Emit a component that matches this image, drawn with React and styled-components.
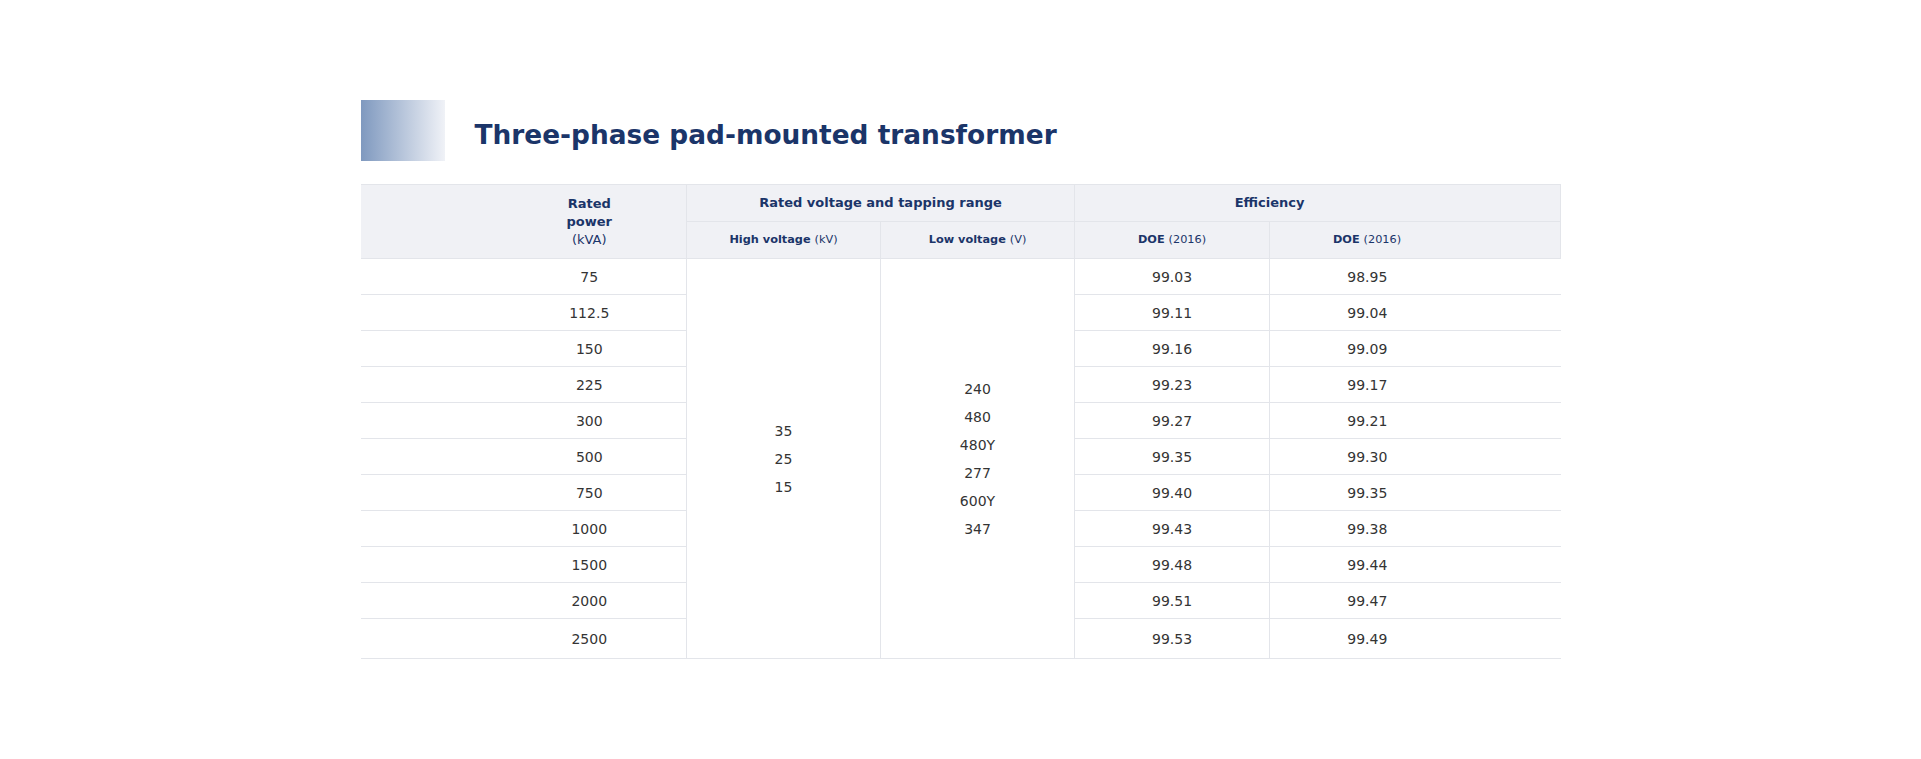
import React from 'react';
import styled, { createGlobalStyle } from 'styled-components';

const navy = '#1b3569';
const line = '#e3e5ea';

const ratings = [
  ['75', '99.03', '98.95'],
  ['112.5', '99.11', '99.04'],
  ['150', '99.16', '99.09'],
  ['225', '99.23', '99.17'],
  ['300', '99.27', '99.21'],
  ['500', '99.35', '99.30'],
  ['750', '99.40', '99.35'],
  ['1000', '99.43', '99.38'],
  ['1500', '99.48', '99.44'],
  ['2000', '99.51', '99.47'],
  ['2500', '99.53', '99.49'],
];

const highVoltages = ['35', '25', '15'];
const lowVoltages = ['240', '480', '480Y', '277', '600Y', '347'];

const GlobalStyle = createGlobalStyle`
  body {
    margin: 0;
    background: #fff;
    font-family: "DejaVu Sans", "Noto Sans", sans-serif;
  }
`;

const Page = styled.div`
  padding-top: 100px;
  padding-bottom: 100px;
`;

const Wrapper = styled.section`
  width: 1200px;
  margin: 0 auto;
`;

const TitleRow = styled.div`
  display: flex;
  align-items: center;
  gap: 30px;
  height: 61px;
`;

const Swatch = styled.div`
  width: 84px;
  height: 61px;
  background: linear-gradient(90deg, #7f99bf 0%, #f0f2f7 100%);
`;

const Title = styled.h2`
  margin: 0;
  padding-top: 7px;
  font-size: 26.4px;
  font-weight: 700;
  color: ${navy};
`;

const Table = styled.table`
  width: 1200px;
  margin-top: 23px;
  table-layout: fixed;
  border-collapse: collapse;
`;

const HeadRow = styled.tr`
  height: ${(p) => p.$h}px;
`;

const Th = styled.th`
  background: #f0f1f5;
  border: 1px solid ${line};
  border-left: ${(p) => (p.$first ? 'none' : `1px solid ${line}`)};
  color: ${navy};
  font-size: ${(p) => (p.$small ? 11.3 : 13)}px;
  font-weight: 700;
  line-height: 18px;
  text-align: center;
  vertical-align: middle;
  padding: 0 ${(p) => (p.$last ? 96 : 0)}px 0 ${(p) => (p.$first ? 132 : 0)}px;
`;

const Unit = styled.span`
  font-weight: 400;
`;

const Row = styled.tr`
  height: ${(p) => (p.$tall ? 40 : 36)}px;
`;

const Td = styled.td`
  border-top: 1px solid ${line};
  border-bottom: 1px solid ${line};
  border-left: ${(p) => (p.$first ? 'none' : `1px solid ${line}`)};
  color: #343434;
  font-size: 14px;
  text-align: center;
  vertical-align: middle;
  padding: 0 ${(p) => (p.$last ? 96 : 0)}px 0 ${(p) => (p.$first ? 132 : 0)}px;
`;

const SpanTd = styled(Td)`
  line-height: 28px;
  padding-top: 0;
`;

export default function App() {
  return (
    <Page>
      <GlobalStyle />
      <Wrapper>
        <TitleRow>
          <Swatch />
          <Title>Three-phase pad-mounted transformer</Title>
        </TitleRow>
        <Table>
          <colgroup>
            <col style={{ width: 326 }} />
            <col style={{ width: 194 }} />
            <col style={{ width: 194 }} />
            <col style={{ width: 195 }} />
            <col style={{ width: 291 }} />
          </colgroup>
          <thead>
            <HeadRow $h={37}>
              <Th rowSpan={2} $first>
                Rated
                <br />
                power
                <br />
                <Unit>(kVA)</Unit>
              </Th>
              <Th colSpan={2}>Rated voltage and tapping range</Th>
              <Th colSpan={2} $last>
                Efficiency
              </Th>
            </HeadRow>
            <HeadRow $h={37}>
              <Th $small>
                High voltage <Unit>(kV)</Unit>
              </Th>
              <Th $small>
                Low voltage <Unit>(V)</Unit>
              </Th>
              <Th $small>
                DOE <Unit>(2016)</Unit>
              </Th>
              <Th $small $last>
                DOE <Unit>(2016)</Unit>
              </Th>
            </HeadRow>
          </thead>
          <tbody>
            {ratings.map(([power, doeA, doeB], i) => (
              <Row key={power} $tall={i === ratings.length - 1}>
                <Td $first>{power}</Td>
                {i === 0 && (
                  <>
                    <SpanTd rowSpan={ratings.length}>
                      {highVoltages.map((v) => (
                        <div key={v}>{v}</div>
                      ))}
                    </SpanTd>
                    <SpanTd rowSpan={ratings.length}>
                      {lowVoltages.map((v) => (
                        <div key={v}>{v}</div>
                      ))}
                    </SpanTd>
                  </>
                )}
                <Td>{doeA}</Td>
                <Td $last>{doeB}</Td>
              </Row>
            ))}
          </tbody>
        </Table>
      </Wrapper>
    </Page>
  );
}
